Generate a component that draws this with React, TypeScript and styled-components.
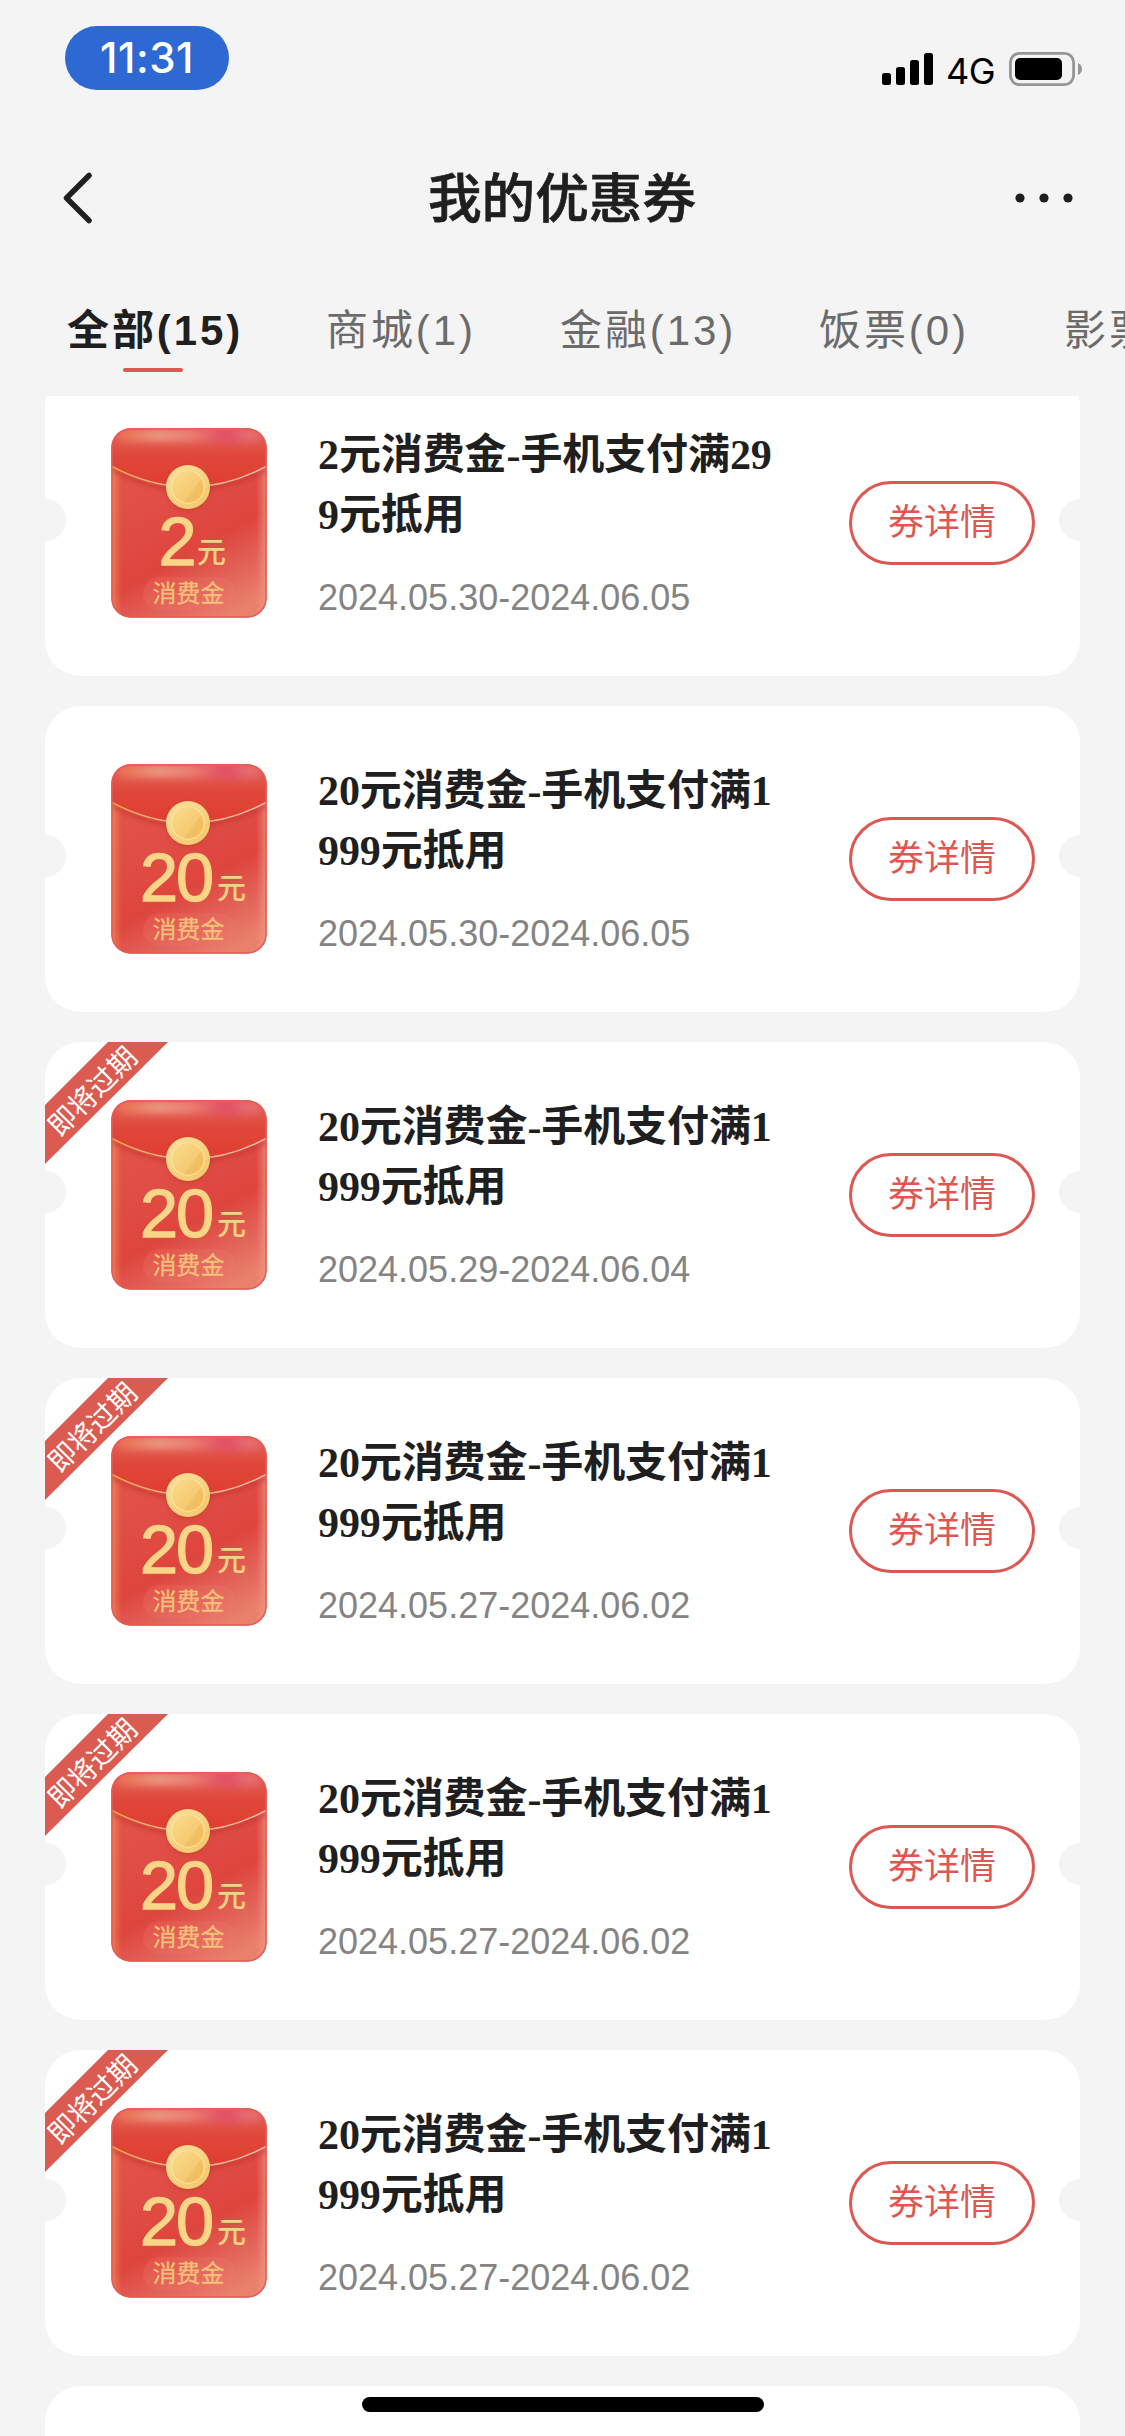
import React, { useId } from "react";
import styled, { createGlobalStyle } from "styled-components";

const sans = `"Liberation Sans", "Noto Sans CJK SC", sans-serif`;
const red = "#dd5753";
const pageBg = "#f4f4f4";

const GlobalStyle = createGlobalStyle`
  *, *::before, *::after { box-sizing: border-box; }
  html, body { margin: 0; padding: 0; background: ${pageBg}; overflow: hidden; }
  button { font: inherit; background: none; border: 0; padding: 0; }
`;

const Screen = styled.div`
  position: relative;
  display: flex;
  flex-direction: column;
  width: 1125px;
  height: 2436px;
  overflow: hidden;
  background: ${pageBg};
  color: #1f1f1f;
  font-family: ${sans};
`;

const StatusBar = styled.div`
  display: flex;
  justify-content: space-between;
  align-items: flex-start;
  flex: none;
  height: 132px;
  padding: 26px 43px 0 65px;
`;

const TimePill = styled.div`
  display: flex;
  align-items: center;
  justify-content: center;
  width: 164px;
  height: 64px;
  border-radius: 32px;
  background: #2d68d3;
  color: #fff;
  font-family: Inter, ${sans};
  font-weight: 500;
  font-size: 42px;
  line-height: 64px;
  letter-spacing: 0.5px;
`;

const StatusIcons = styled.div`
  display: flex;
  align-items: center;
  height: 34px;
  margin-top: 26px;
`;

const Network = styled.span`
  width: 49px;
  margin: 3px 14px 0 12px;
  font-family: Inter, ${sans};
  font-size: 36px;
  font-weight: 400;
  letter-spacing: -0.5px;
  line-height: 34px;
  color: #000;
  white-space: nowrap;
`;

const NavBar = styled.header`
  display: grid;
  grid-template-columns: 200px 1fr 200px;
  align-items: center;
  flex: none;
  height: 132px;
  padding: 0 51px 0 62px;
`;

const NavTitle = styled.h1`
  margin: 0;
  padding: 1px 12px 0 0;
  text-align: center;
  font-size: 53.6px;
  font-weight: 500;
  line-height: 80px;
  -webkit-text-stroke: 0.7px currentColor;
`;

const NavButton = styled.button<{ $end?: boolean }>`
  display: flex;
  justify-content: ${(p) => (p.$end ? "flex-end" : "flex-start")};
`;

const Tabs = styled.nav`
  display: flex;
  flex: none;
  height: 132px;
  padding-left: 66px;
  gap: 82px;
`;

const Tab = styled.button<{ $active?: boolean; $width: number }>`
  position: relative;
  flex: none;
  width: ${(p) => p.$width}px;
  height: 132px;
  padding-top: 1px;
  text-align: left;
  text-indent: ${(p) => (p.$active ? 1 : 0)}px;
  white-space: nowrap;
  font-size: 42px;
  line-height: 131px;
  letter-spacing: 2.9px;
  color: ${(p) => (p.$active ? "#1f1f1f" : "#6b6b6b")};
  font-weight: ${(p) => (p.$active ? 700 : 400)};
`;

const TabMarker = styled.i`
  position: absolute;
  left: 57px;
  top: 104px;
  width: 60px;
  height: 4px;
  border-radius: 2px;
  background: ${red};
`;

const List = styled.main`
  flex: 1;
  min-height: 0;
  overflow: hidden;
  padding: 0 45px;
`;

const Scrolled = styled.div`
  display: flex;
  flex-direction: column;
  gap: 30px;
  margin-top: -26px;
`;

const Card = styled.article`
  position: relative;
  display: flex;
  align-items: flex-start;
  flex: none;
  height: 306px;
  padding: 54px 45px 0 66px;
  border-radius: 36px;
  background: #fff;
`;

const Notch = styled.i<{ $side: "left" | "right" }>`
  position: absolute;
  top: 129px;
  ${(p) => p.$side}: 0;
  width: 21px;
  height: 42px;
  background: ${pageBg};
  border-radius: ${(p) => (p.$side === "left" ? "0 21px 21px 0" : "21px 0 0 21px")};
`;

const RibbonBox = styled.div`
  position: absolute;
  left: 0;
  top: 0;
  width: 123px;
  height: 123px;
  clip-path: polygon(63px 0, 123px 0, 0 122px, 0 63px);
  background: #dc5b50;
  display: flex;
  align-items: center;
  justify-content: center;
`;

const RibbonText = styled.span`
  position: relative;
  left: -15px;
  top: -14px;
  transform: rotate(-45deg);
  font-family: "Noto Sans CJK SC", sans-serif;
  font-size: 28px;
  line-height: 42px;
  white-space: nowrap;
  color: #fff;
`;

const Info = styled.div`
  width: 464px;
  margin-left: 51px;
`;

const Name = styled.h2`
  margin: 0;
  padding-top: 1px;
  font-family: "Liberation Serif", "Noto Sans CJK SC", serif;
  font-size: 42px;
  line-height: 60px;
  font-weight: 700;
  letter-spacing: -0.1px;
  word-break: break-all;
`;

const Dates = styled.p`
  margin: 32px 0 0;
  font-size: 36px;
  line-height: 42px;
  color: #848484;
  white-space: nowrap;
`;

const DetailButton = styled.button`
  width: 186px;
  height: 84px;
  margin: 57px 0 0 auto;
  border: 3px solid ${red};
  border-radius: 42px;
  color: ${red};
  font-size: 36px;
  line-height: 76px;
  text-align: center;
`;

const EnvelopeArt = styled.svg`
  flex: none;
  margin-top: 4px;
  font-family: "Noto Sans CJK SC", sans-serif;
`;

const HomeIndicator = styled.div`
  position: absolute;
  left: 362px;
  bottom: 24px;
  width: 402px;
  height: 15px;
  border-radius: 8px;
  background: #000;
`;

function Envelope({ amount }: { amount: string }) {
  const id = useId().replace(/[^a-zA-Z0-9]/g, "");
  const wide = amount.length > 1;
  return (
    <EnvelopeArt width="156" height="190" viewBox="0 0 156 190">
      <defs>
        <linearGradient id={`${id}b`} x1="0.3" y1="0" x2="0.75" y2="1">
          <stop offset="0" stopColor="#e4564b" />
          <stop offset="0.3" stopColor="#e04f47" />
          <stop offset="0.62" stopColor="#de453d" />
          <stop offset="0.82" stopColor="#e2645a" />
          <stop offset="1" stopColor="#e9826d" />
        </linearGradient>
        <linearGradient id={`${id}f`} x1="0" y1="0" x2="0" y2="1">
          <stop offset="0" stopColor="#e4625c" />
          <stop offset="0.45" stopColor="#e0483b" />
          <stop offset="1" stopColor="#df3d31" />
        </linearGradient>
        <linearGradient id={`${id}s`} x1="0" y1="0" x2="1" y2="0">
          <stop offset="0" stopColor="#e8704c" />
          <stop offset="0.3" stopColor="#eea18a" />
          <stop offset="0.52" stopColor="#ea8478" />
          <stop offset="0.75" stopColor="#e2486a" />
          <stop offset="0.9" stopColor="#e67078" />
          <stop offset="1" stopColor="#e56a60" />
        </linearGradient>
        <linearGradient id={`${id}e`} x1="0" y1="0" x2="1" y2="0">
          <stop offset="0" stopColor="#f0a058" stopOpacity="0.7" />
          <stop offset="0.07" stopColor="#ee8a58" stopOpacity="0" />
          <stop offset="0.93" stopColor="#f09080" stopOpacity="0" />
          <stop offset="1" stopColor="#f09a86" stopOpacity="0.75" />
        </linearGradient>
        <linearGradient id={`${id}c`} x1="0" y1="0" x2="1" y2="1">
          <stop offset="0" stopColor="#fbe29b" />
          <stop offset="1" stopColor="#f4c566" />
        </linearGradient>
        <linearGradient id={`${id}d`} x1="0" y1="0" x2="1" y2="1">
          <stop offset="0" stopColor="#fadb8c" />
          <stop offset="1" stopColor="#f3c163" />
        </linearGradient>
        <linearGradient id={`${id}l`} x1="0" y1="0" x2="1" y2="0">
          <stop offset="0" stopColor="#f0a040" />
          <stop offset="0.45" stopColor="#f3b891" />
          <stop offset="1" stopColor="#f4bda4" />
        </linearGradient>
        <filter id={`${id}g`} x="-20%" y="-150%" width="140%" height="400%">
          <feGaussianBlur stdDeviation="4" />
        </filter>
        <filter id={`${id}h`} x="-20%" y="-20%" width="140%" height="140%">
          <feGaussianBlur stdDeviation="2" />
        </filter>
        <clipPath id={`${id}k`}>
          <rect x="0.5" y="0.5" width="155" height="189" rx="19" />
        </clipPath>
        <clipPath id={`${id}m`}>
          <circle cx="77" cy="59" r="15.5" />
        </clipPath>
      </defs>
      <g clipPath={`url(#${id}k)`}>
        <rect width="156" height="190" fill={`url(#${id}b)`} />
        <rect y="38" width="156" height="152" fill={`url(#${id}e)`} />
        <path d="M0 41Q78 83 156 41" fill="none" stroke="#b9302b" strokeOpacity="0.55" strokeWidth="4" filter={`url(#${id}h)`} />
        <path d="M0 0H156V38Q78 80 0 38Z" fill={`url(#${id}f)`} />
        <rect x="5" y="2" width="146" height="11" rx="5" fill={`url(#${id}s)`} filter={`url(#${id}g)`} />
        <path d="M0 38Q78 80 156 38" fill="none" stroke={`url(#${id}l)`} strokeWidth="1.5" />
      </g>
      <rect x="1" y="1" width="154" height="188" rx="18.5" fill="none" stroke="#e55a58" strokeWidth="1.5" />
      <circle cx="77" cy="61" r="22.5" fill="#b83a26" opacity="0.4" filter={`url(#${id}h)`} />
      <circle cx="77" cy="59" r="22" fill={`url(#${id}c)`} />
      <circle cx="77" cy="59" r="16.4" fill={`url(#${id}d)`} stroke="#fbe6ab" strokeWidth="1" />
      <path d="M94 46V78H70Z" fill="#f0b854" opacity="0.5" clipPath={`url(#${id}m)`} />
      <text
        x={wide ? 29 : 47.5}
        y="137.3"
        fontFamily="Liberation Sans, sans-serif"
        fontSize="68.5"
        letterSpacing="-2.2"
        fill="#f8d587"
        stroke="#f8d587"
        strokeWidth="1.3"
      >
        {amount}
      </text>
      <text x={wide ? 106 : 86} y="135" fontSize="29" fontWeight="500" fill="#f8d283">
        元
      </text>
      <rect x="32" y="149" width="93" height="33" rx="16.5" fill="#f1786b" opacity="0.25" />
      <text x="41.5" y="174" fontSize="24" fill="#f4c078" stroke="#f4c078" strokeWidth="0.3">
        消费金
      </text>
    </EnvelopeArt>
  );
}

interface Coupon {
  amount: string;
  name: string;
  dates: string;
  expiring?: boolean;
}

const coupons: Coupon[] = [
  { amount: "2", name: "2元消费金-手机支付满299元抵用", dates: "2024.05.30-2024.06.05" },
  { amount: "20", name: "20元消费金-手机支付满1999元抵用", dates: "2024.05.30-2024.06.05" },
  { amount: "20", name: "20元消费金-手机支付满1999元抵用", dates: "2024.05.29-2024.06.04", expiring: true },
  { amount: "20", name: "20元消费金-手机支付满1999元抵用", dates: "2024.05.27-2024.06.02", expiring: true },
  { amount: "20", name: "20元消费金-手机支付满1999元抵用", dates: "2024.05.27-2024.06.02", expiring: true },
  { amount: "20", name: "20元消费金-手机支付满1999元抵用", dates: "2024.05.27-2024.06.02", expiring: true },
];

const tabs = [
  { label: "全部(15)", width: 178 },
  { label: "商城(1)", width: 152 },
  { label: "金融(13)", width: 177 },
  { label: "饭票(0)", width: 163 },
  { label: "影票", width: 100 },
];

function CouponCard({ coupon }: { coupon: Coupon }) {
  return (
    <Card>
      <Notch $side="left" />
      <Notch $side="right" />
      {coupon.expiring && (
        <RibbonBox>
          <RibbonText>即将过期</RibbonText>
        </RibbonBox>
      )}
      <Envelope amount={coupon.amount} />
      <Info>
        <Name>{coupon.name}</Name>
        <Dates>{coupon.dates}</Dates>
      </Info>
      <DetailButton>券详情</DetailButton>
    </Card>
  );
}

export default function App() {
  return (
    <>
      <GlobalStyle />
      <Screen>
        <StatusBar>
          <TimePill>11:31</TimePill>
          <StatusIcons>
            <svg width="52" height="34" viewBox="0 0 52 34">
              <rect x="0" y="21" width="9" height="12" rx="2.5" />
              <rect x="14" y="15" width="9" height="18" rx="2.5" />
              <rect x="28" y="8" width="9" height="25" rx="2.5" />
              <rect x="42" y="1" width="9" height="32" rx="2.5" />
            </svg>
            <Network>4G</Network>
            <svg width="73" height="34" viewBox="0 0 73 34">
              <rect x="1.4" y="1.4" width="63.2" height="31.2" rx="9" fill="none" stroke="#969696" strokeWidth="2.8" />
              <rect x="6" y="6" width="47" height="22" rx="5" />
              <path d="M69 11Q73 13 73 17T69 23Z" fill="#969696" />
            </svg>
          </StatusIcons>
        </StatusBar>
        <NavBar>
          <NavButton aria-label="返回">
            <svg width="32" height="54" viewBox="0 0 32 54" fill="none" stroke="#1f1f1f" strokeWidth="5.5" strokeLinecap="round" strokeLinejoin="round">
              <path d="M27 4.5L4.5 27L27 49.5" />
            </svg>
          </NavButton>
          <NavTitle>我的优惠券</NavTitle>
          <NavButton $end aria-label="更多">
            <svg width="60" height="12" viewBox="0 0 60 12" fill="#1f1f1f">
              <circle cx="6" cy="6" r="4.6" />
              <circle cx="30" cy="6" r="4.6" />
              <circle cx="54" cy="6" r="4.6" />
            </svg>
          </NavButton>
        </NavBar>
        <Tabs>
          {tabs.map((tab, i) => (
            <Tab key={tab.label} $active={i === 0} $width={tab.width}>
              {tab.label}
              {i === 0 && <TabMarker />}
            </Tab>
          ))}
        </Tabs>
        <List>
          <Scrolled>
            {coupons.map((coupon, i) => (
              <CouponCard key={i} coupon={coupon} />
            ))}
            <Card />
          </Scrolled>
        </List>
        <HomeIndicator />
      </Screen>
    </>
  );
}
